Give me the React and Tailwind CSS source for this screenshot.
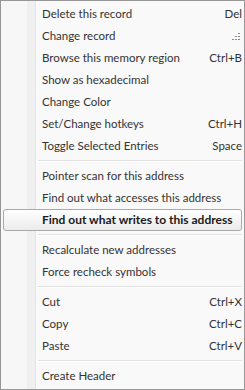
import React from 'react';

const groups = [
    [
        { label: 'Delete this record', key: 'Del' },
        { label: 'Change record', key: 'grip' },
        { label: 'Browse this memory region', key: 'Ctrl+B' },
        { label: 'Show as hexadecimal' },
        { label: 'Change Color' },
        { label: 'Set/Change hotkeys', key: 'Ctrl+H' },
        { label: 'Toggle Selected Entries', key: 'Space' },
    ],
    [
        { label: 'Pointer scan for this address' },
        { label: 'Find out what accesses this address' },
        { label: 'Find out what writes to this address', active: true },
    ],
    [
        { label: 'Recalculate new addresses' },
        { label: 'Force recheck symbols' },
    ],
    [
        { label: 'Cut', key: 'Ctrl+X' },
        { label: 'Copy', key: 'Ctrl+C' },
        { label: 'Paste', key: 'Ctrl+V' },
    ],
    [
        { label: 'Create Header' },
    ],
];

const Grip = () => (
    <svg width="8" height="7" viewBox="0 0 8 7" className="mr-[2px]">
        <rect x="6" y="0" width="2" height="1" fill="#8a8a8a" />
        <rect x="3" y="3" width="2" height="1" fill="#8a8a8a" />
        <rect x="6" y="3" width="2" height="1" fill="#8a8a8a" />
        <rect x="0" y="6" width="2" height="1" fill="#8a8a8a" />
        <rect x="3" y="6" width="2" height="1" fill="#8a8a8a" />
        <rect x="6" y="6" width="2" height="1" fill="#8a8a8a" />
    </svg>
);

const Item = ({ label, shortcut, active }) => (
    <div
        className={`h-[22px] flex items-center justify-between whitespace-nowrap ${
            active
                ? 'rounded-[3px] border border-[#a9a9a9] bg-[linear-gradient(to_bottom,#ffffff,#ebebeb)] pl-[38px] font-bold text-[12px] text-[#1a1a1a]'
                : 'pl-[39px] text-[#333333]'
        }`}
    >
        <span>{label}</span>
        {shortcut === 'grip' ? <Grip /> : shortcut && <span className="text-[#333333]">{shortcut}</span>}
    </div>
);

const Separator = () => (
    <div className="h-[8px] flex items-center pl-[35px]">
        <div className="w-full border-t border-[#e0e0e0] border-b-white border-b" />
    </div>
);

export default function App() {
    return (
        <div className="w-[245px] h-[390px] overflow-hidden border border-[#979797] bg-[linear-gradient(to_right,#f7f7f7_26px,#f0f0f0_26px,#f0f0f0_34px,#e2e3e3_34px,#e2e3e3_35px,#ffffff_35px,#ffffff_36px,#f9f9f9_36px)] p-[2px] font-['Lato',sans-serif] text-[11.5px] leading-none">
            {groups.map((group, i) => (
                <div key={i}>
                    {i > 0 && <Separator />}
                    {group.map(item => (
                        <Item key={item.label} label={item.label} shortcut={item.key} active={item.active} />
                    ))}
                </div>
            ))}
        </div>
    );
}
